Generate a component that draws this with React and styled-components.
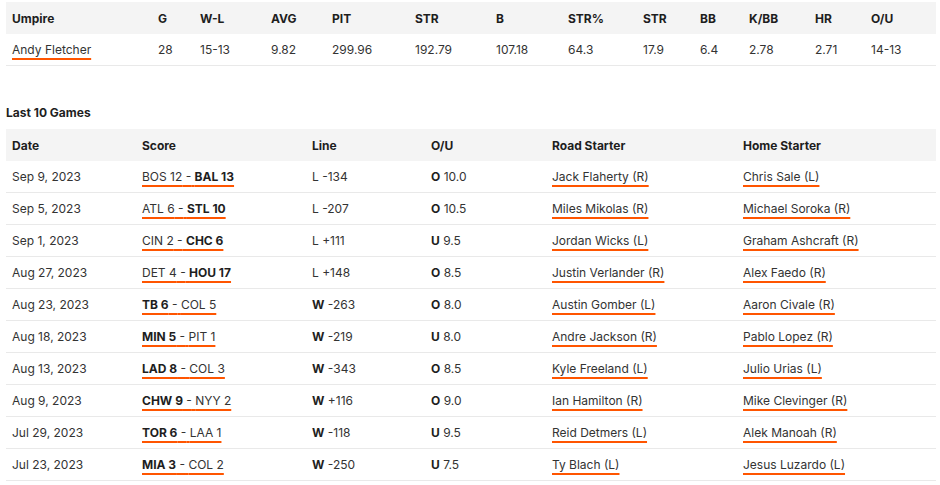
import React from "react";
import styled, { createGlobalStyle } from "styled-components";

const GlobalStyle = createGlobalStyle`
  body {
    margin: 0;
    background: #fff;
    font-family: Inter, "Noto Sans", sans-serif;
    font-size: 12px;
    color: #333;
  }
`;

const umpireCols = "146px 42px 71px 61px 83px 81px 72px 75px 57px 49px 66px 56px 71px";
const gameCols = "130px 170px 119px 121px 191px 199px";

const umpireHead = ["Umpire", "G", "W-L", "AVG", "PIT", "STR", "B", "STR%", "STR", "BB", "K/BB", "HR", "O/U"];
const umpireStats = ["28", "15-13", "9.82", "299.96", "192.79", "107.18", "64.3", "17.9", "6.4", "2.78", "2.71", "14-13"];

const games = [
  { date: "Sep 9, 2023", away: "BOS 12", home: "BAL 13", homeWon: true, res: "L", line: "-134", ou: "O", total: "10.0", road: "Jack Flaherty (R)", homeSp: "Chris Sale (L)" },
  { date: "Sep 5, 2023", away: "ATL 6", home: "STL 10", homeWon: true, res: "L", line: "-207", ou: "O", total: "10.5", road: "Miles Mikolas (R)", homeSp: "Michael Soroka (R)" },
  { date: "Sep 1, 2023", away: "CIN 2", home: "CHC 6", homeWon: true, res: "L", line: "+111", ou: "U", total: "9.5", road: "Jordan Wicks (L)", homeSp: "Graham Ashcraft (R)" },
  { date: "Aug 27, 2023", away: "DET 4", home: "HOU 17", homeWon: true, res: "L", line: "+148", ou: "O", total: "8.5", road: "Justin Verlander (R)", homeSp: "Alex Faedo (R)" },
  { date: "Aug 23, 2023", away: "TB 6", home: "COL 5", homeWon: false, res: "W", line: "-263", ou: "O", total: "8.0", road: "Austin Gomber (L)", homeSp: "Aaron Civale (R)" },
  { date: "Aug 18, 2023", away: "MIN 5", home: "PIT 1", homeWon: false, res: "W", line: "-219", ou: "U", total: "8.0", road: "Andre Jackson (R)", homeSp: "Pablo Lopez (R)" },
  { date: "Aug 13, 2023", away: "LAD 8", home: "COL 3", homeWon: false, res: "W", line: "-343", ou: "O", total: "8.5", road: "Kyle Freeland (L)", homeSp: "Julio Urias (L)" },
  { date: "Aug 9, 2023", away: "CHW 9", home: "NYY 2", homeWon: false, res: "W", line: "+116", ou: "O", total: "9.0", road: "Ian Hamilton (R)", homeSp: "Mike Clevinger (R)" },
  { date: "Jul 29, 2023", away: "TOR 6", home: "LAA 1", homeWon: false, res: "W", line: "-118", ou: "U", total: "9.5", road: "Reid Detmers (L)", homeSp: "Alek Manoah (R)" },
  { date: "Jul 23, 2023", away: "MIA 3", home: "COL 2", homeWon: false, res: "W", line: "-250", ou: "U", total: "7.5", road: "Ty Blach (L)", homeSp: "Jesus Luzardo (L)" },
];

const App = () => {
  return (
    <Page>
      <GlobalStyle />
      <Table>
        <HeadRow $cols={umpireCols}>
          {umpireHead.map((h, i) => (
            <HeadCell key={i}>{h}</HeadCell>
          ))}
        </HeadRow>
        <Row $cols={umpireCols}>
          <Cell>
            <PlayerLink href="#">Andy Fletcher</PlayerLink>
          </Cell>
          {umpireStats.map((s, i) => (
            <Cell key={i}>{s}</Cell>
          ))}
        </Row>
      </Table>

      <SectionTitle>Last 10 Games</SectionTitle>
      <Table>
        <HeadRow $cols={gameCols}>
          <HeadCell>Date</HeadCell>
          <HeadCell>Score</HeadCell>
          <HeadCell>Line</HeadCell>
          <HeadCell>O/U</HeadCell>
          <HeadCell>Road Starter</HeadCell>
          <HeadCell>Home Starter</HeadCell>
        </HeadRow>
        {games.map((g) => (
          <Row $cols={gameCols} key={g.date}>
            <Cell>{g.date}</Cell>
            <Cell>
              <PlayerLink href="#">
                {g.homeWon ? g.away : <b>{g.away}</b>} -{" "}
                {g.homeWon ? <b>{g.home}</b> : g.home}
              </PlayerLink>
            </Cell>
            <Cell>
              {g.res === "W" ? <b>W</b> : "L"} {g.line}
            </Cell>
            <Cell>
              <b>{g.ou}</b> {g.total}
            </Cell>
            <Cell>
              <PlayerLink href="#">{g.road}</PlayerLink>
            </Cell>
            <Cell>
              <PlayerLink href="#">{g.homeSp}</PlayerLink>
            </Cell>
          </Row>
        ))}
      </Table>
    </Page>
  );
};

const Page = styled.div`
  padding: 2px 4px 0 6px;
  width: 930px;
`;

const Table = styled.div`
  display: flex;
  flex-direction: column;
  width: 930px;
`;

const HeadRow = styled.div`
  display: grid;
  grid-template-columns: ${(props) => props.$cols};
  height: 32px;
  align-items: center;
  background: #f4f4f4;
`;

const Row = styled.div`
  display: grid;
  grid-template-columns: ${(props) => props.$cols};
  height: 31px;
  align-items: center;
  border-bottom: 1px solid #e9e9e9;
`;

const HeadCell = styled.div`
  padding: 0 6px;
  font-weight: 700;
  color: #1e1e1e;
  white-space: nowrap;
`;

const Cell = styled.div`
  padding: 0 6px;
  color: #333;
  white-space: nowrap;

  b {
    font-weight: 700;
    color: #1e1e1e;
  }
`;

const PlayerLink = styled.a`
  color: #333;
  text-decoration: underline;
  text-decoration-color: #ff5500;
  text-decoration-thickness: 2px;
  text-underline-offset: 4px;
`;

const SectionTitle = styled.div`
  font-weight: 700;
  color: #1e1e1e;
  margin: 39px 0 8px;
  line-height: 16px;
`;

export default App;
